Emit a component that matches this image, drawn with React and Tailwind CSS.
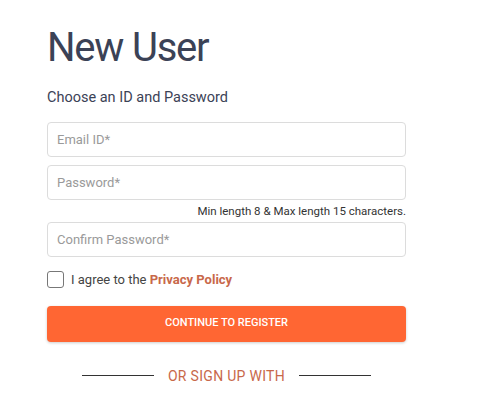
import { useState } from "react";

const App = () => {
    const [email, setEmail] = useState("");
    const [password, setPassword] = useState("");
    const [confirm, setConfirm] = useState("");
    const [agree, setAgree] = useState(false);

    const inputClass =
        "w-full h-[35px] rounded-[4px] border border-[#dcdcdc] bg-white px-[9px] text-[13px] text-[#333] placeholder:text-[#9a9a9a] focus:outline-none";

    return (
        <div className="min-h-screen bg-white font-['Roboto',sans-serif]">
            <div className="w-[359px] ml-[47px] pt-[24px] flex flex-col">
                <h1 className="text-[40px] leading-[48px] tracking-[-1.2px] text-[#3b4256] font-normal">
                    New User
                </h1>
                <p className="mt-[16px] text-[14.5px] leading-[20px] text-[#3b4256]">
                    Choose an ID and Password
                </p>

                <div className="mt-[14px] flex flex-col">
                    <input
                        type="email"
                        placeholder="Email ID*"
                        value={email}
                        onChange={(e) => setEmail(e.target.value)}
                        className={inputClass}
                    />
                    <input
                        type="password"
                        placeholder="Password*"
                        value={password}
                        onChange={(e) => setPassword(e.target.value)}
                        className={`${inputClass} mt-[8px]`}
                    />
                    <p className="text-right text-[11.5px] leading-[22px] text-[#333]">
                        Min length 8 &amp; Max length 15 characters.
                    </p>
                    <input
                        type="password"
                        placeholder="Confirm Password*"
                        value={confirm}
                        onChange={(e) => setConfirm(e.target.value)}
                        className={inputClass}
                    />
                </div>

                <label className="mt-[13px] flex items-center gap-[7px] cursor-pointer">
                    <input
                        type="checkbox"
                        checked={agree}
                        onChange={(e) => setAgree(e.target.checked)}
                        className="appearance-none w-[17px] h-[17px] rounded-[3px] border border-[#777] bg-white checked:bg-[#ff6633] checked:border-[#ff6633]"
                    />
                    <span className="text-[13px] text-[#444]">
                        I agree to the{" "}
                        <span className="font-bold text-[#c8684a]">
                            Privacy Policy
                        </span>
                    </span>
                </label>

                <button className="mt-[16px] h-[36px] w-full rounded-[4px] bg-[#ff6633] text-white text-[11px] font-medium uppercase shadow-[0_1px_3px_rgba(0,0,0,0.2)]">
                    Continue to Register
                </button>

                <div className="mt-[24px] flex items-center justify-center gap-[14px]">
                    <span className="w-[72px] h-px bg-[#333]" />
                    <span className="text-[14px] leading-[20px] tracking-[0.3px] text-[#c8684a] uppercase">
                        Or sign up with
                    </span>
                    <span className="w-[72px] h-px bg-[#333]" />
                </div>
            </div>
        </div>
    );
};

export default App;
